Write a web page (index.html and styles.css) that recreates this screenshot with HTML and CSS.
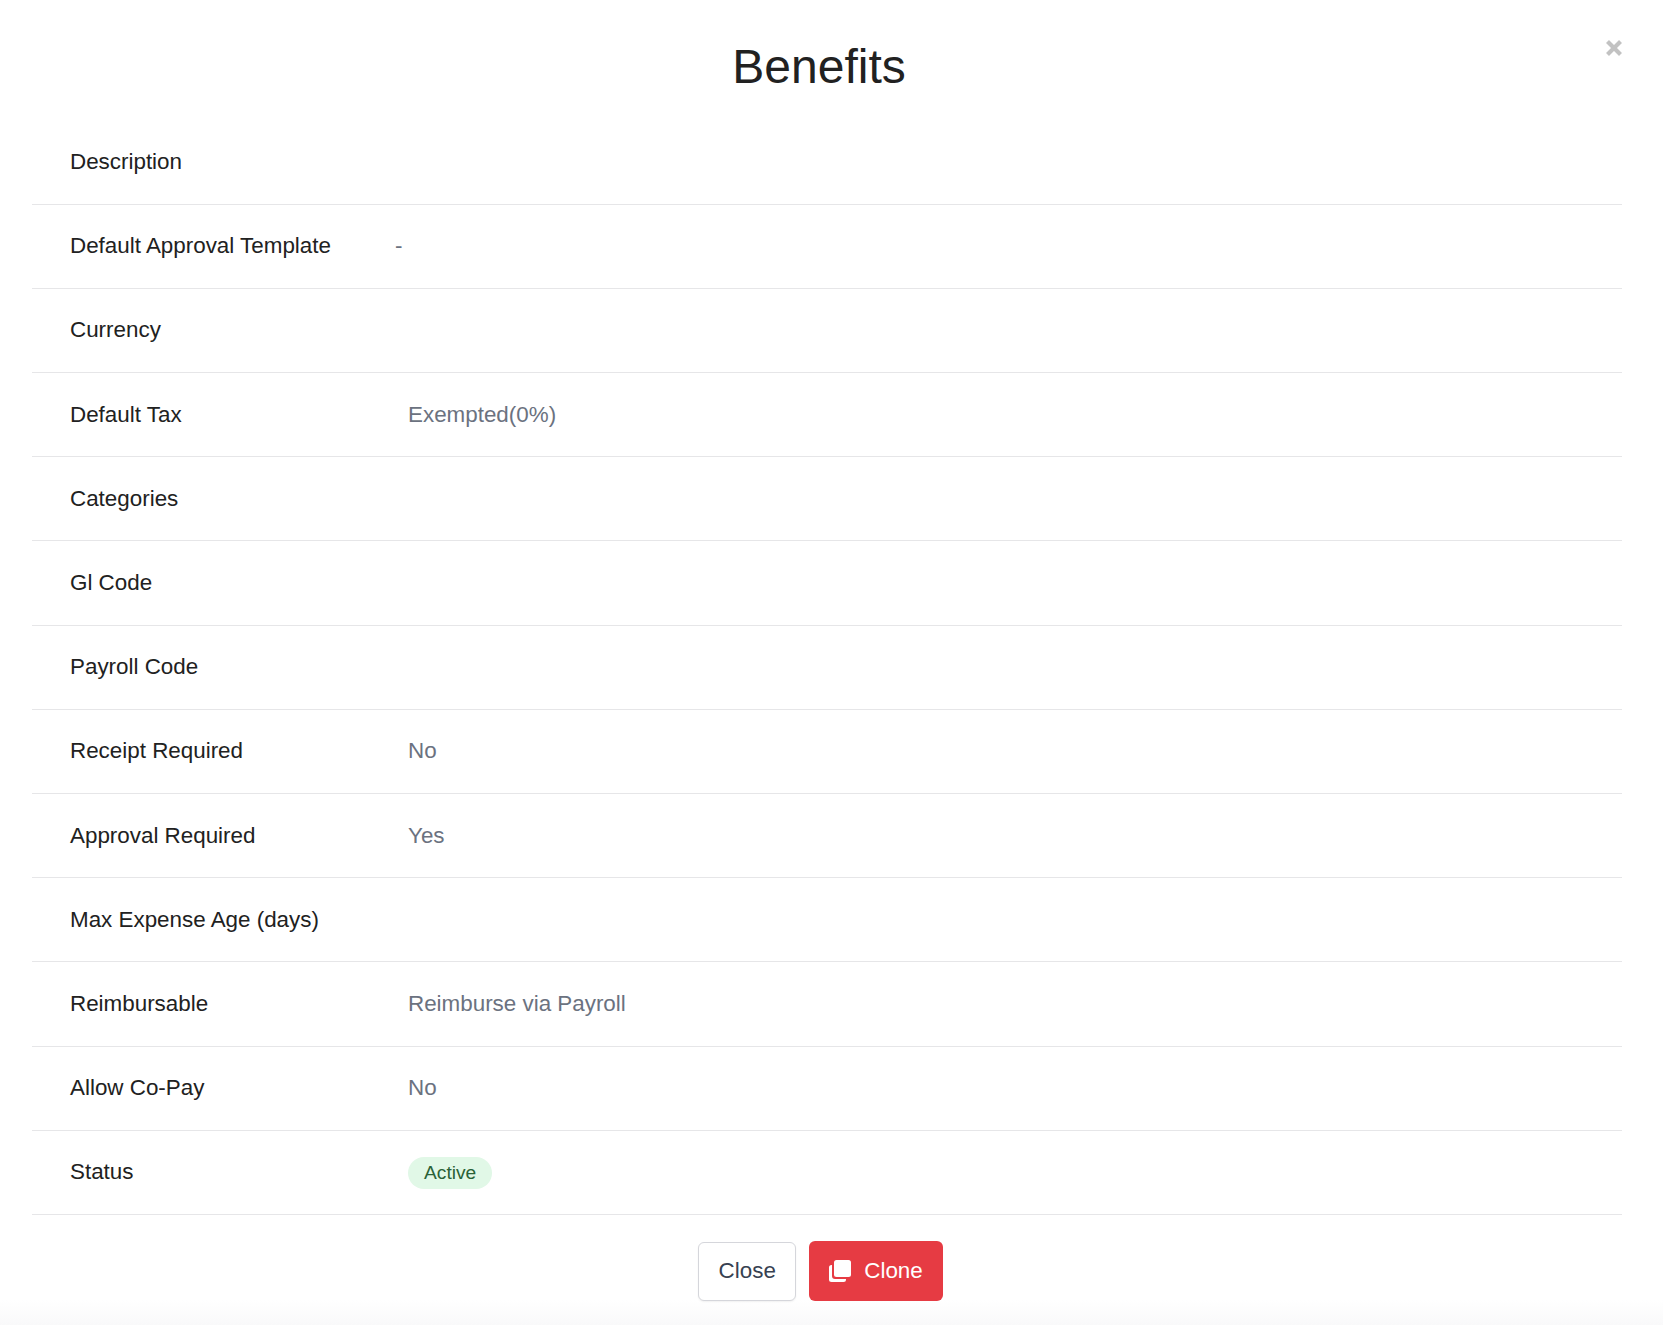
FILE: index.html
```html
<!DOCTYPE html>
<html lang="en">
<head>
    <meta charset="UTF-8">
    <title>Benefits</title>
    <link rel="stylesheet" href="styles.css">
</head>
<body>
    <div class="modal">
        <button class="modal-close" aria-label="Close">
            <svg width="16" height="16" viewBox="0 0 16 16"><path d="M1.500 1.500l13 13M14.500 1.500l-13 13" stroke="#c2c2c2" stroke-width="4.200" fill="none"/></svg>
        </button>
        <h1 class="modal-title">Benefits</h1>

        <div class="details">
            <div class="row"><div class="label">Description</div></div>
            <div class="row"><div class="label">Default Approval Template</div><div class="value dash">-</div></div>
            <div class="row"><div class="label">Currency</div></div>
            <div class="row"><div class="label">Default Tax</div><div class="value">Exempted(0%)</div></div>
            <div class="row"><div class="label">Categories</div></div>
            <div class="row"><div class="label">Gl Code</div></div>
            <div class="row"><div class="label">Payroll Code</div></div>
            <div class="row"><div class="label">Receipt Required</div><div class="value">No</div></div>
            <div class="row"><div class="label">Approval Required</div><div class="value">Yes</div></div>
            <div class="row"><div class="label">Max Expense Age (days)</div></div>
            <div class="row"><div class="label">Reimbursable</div><div class="value">Reimburse via Payroll</div></div>
            <div class="row"><div class="label">Allow Co-Pay</div><div class="value">No</div></div>
            <div class="row"><div class="label">Status</div><div class="value"><span class="badge">Active</span></div></div>
        </div>

        <div class="modal-footer">
            <button class="btn btn-close">Close</button>
            <button class="btn btn-clone">
                <svg width="24" height="24" viewBox="0 0 24 24"><rect x="6" y="1" width="17" height="17" rx="2.5" fill="#fff"/><path d="M3.5 6H4v11a3 3 0 0 0 3 3h11v.5a2.5 2.5 0 0 1-2.5 2.5h-12A2.5 2.5 0 0 1 1 20.500V8.500A2.500 2.500 0 0 1 3.500 6z" fill="#fff"/></svg>
                Clone
            </button>
        </div>
    </div>
</body>
</html>
```

FILE: styles.css
```css
* {
    margin: 0;
    padding: 0;
    box-sizing: border-box;
}

body {
    font-family: "Liberation Sans", Arial, sans-serif;
    background: #fff;
    height: 1325px;
    overflow: hidden;
}

.modal {
    position: relative;
    height: 1325px;
    padding: 0 41px 0 32px;
    background: linear-gradient(180deg, #fff 0, #fff 1300px, #f9f9fa 1325px);
}

.modal-close {
    position: absolute;
    top: 40px;
    right: 41px;
    width: 16px;
    height: 16px;
    border: 0;
    background: none;
    display: flex;
}

.modal-title {
    height: 120.5px;
    padding: 37px 16px 0 0;
    text-align: center;
    font-size: 48px;
    line-height: 60px;
    font-weight: 400;
    color: #212121;
}

.row {
    display: flex;
    align-items: center;
    height: 84.2px;
    padding-left: 38px;
    border-bottom: 1px solid #e6e6e8;
}

.label {
    width: 338px;
    flex-shrink: 0;
    font-size: 22.4px;
    color: #212121;
}

.value {
    font-size: 22.4px;
    color: #6b7280;
}

.value.dash {
    margin-left: -13px;
}

.badge {
    display: block;
    margin-top: 2px;
    padding: 0 16px;
    height: 32px;
    line-height: 32px;
    border-radius: 16px;
    background: #e1f8e7;
    color: #2a6237;
    font-size: 19.2px;
}

.modal-footer {
    display: flex;
    justify-content: center;
    align-items: flex-end;
    gap: 13px;
    margin-top: 26px;
    padding-right: 13px;
}

.btn {
    font-family: inherit;
    font-size: 22.4px;
    border-radius: 6px;
}

.btn-close {
    width: 98px;
    height: 59px;
    background: #fff;
    border: 1px solid #d5d6db;
    color: #374151;
    box-shadow: 0 1px 2px rgba(0, 0, 0, 0.06);
}

.btn-clone {
    display: flex;
    align-items: center;
    gap: 12px;
    height: 60px;
    padding: 0 20px 0 19px;
    background: #e63b43;
    border: 0;
    color: #fff;
}
```
